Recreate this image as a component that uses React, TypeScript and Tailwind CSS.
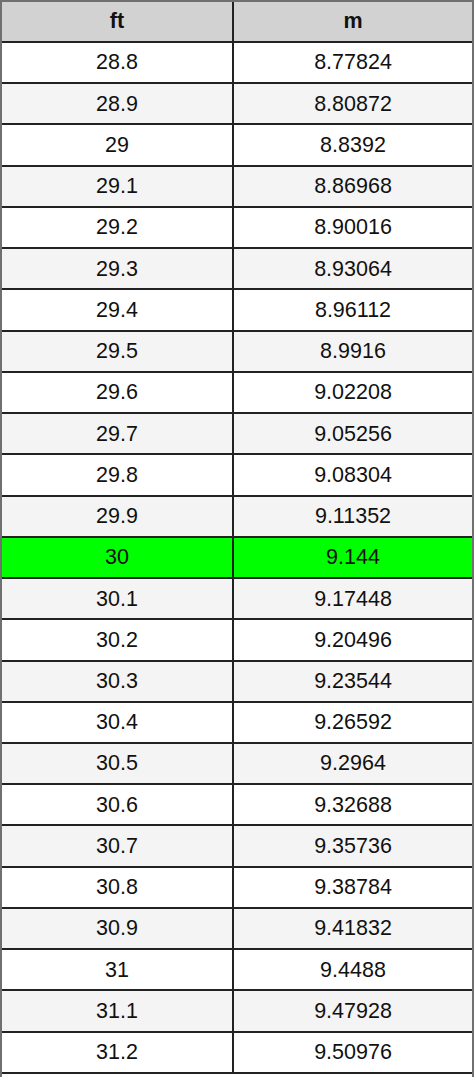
import React from "react"

const rows: [string, string][] = [
  ["28.8", "8.77824"],
  ["28.9", "8.80872"],
  ["29", "8.8392"],
  ["29.1", "8.86968"],
  ["29.2", "8.90016"],
  ["29.3", "8.93064"],
  ["29.4", "8.96112"],
  ["29.5", "8.9916"],
  ["29.6", "9.02208"],
  ["29.7", "9.05256"],
  ["29.8", "9.08304"],
  ["29.9", "9.11352"],
  ["30", "9.144"],
  ["30.1", "9.17448"],
  ["30.2", "9.20496"],
  ["30.3", "9.23544"],
  ["30.4", "9.26592"],
  ["30.5", "9.2964"],
  ["30.6", "9.32688"],
  ["30.7", "9.35736"],
  ["30.8", "9.38784"],
  ["30.9", "9.41832"],
  ["31", "9.4488"],
  ["31.1", "9.47928"],
  ["31.2", "9.50976"]
]

export default function App() {
  return (
    <div className="w-[474px] h-[1077px] bg-white font-['Liberation_Sans',Arial,sans-serif] text-[21.5px] text-[#111]">
      <div className="border-x-2 border-t-2 border-[#707070]">
        {/* Header */}
        <div className="flex h-[41px] bg-[#d2d2d2] border-b-2 border-[#222] font-bold">
          <div className="w-[232px] flex items-center justify-center border-r-2 border-[#222]">ft</div>
          <div className="flex-1 flex items-center justify-center">m</div>
        </div>

        {rows.map(([ft, m], i) => {
          const hl = ft === "30"
          const bg = hl ? "bg-[#00ff00]" : i % 2 === 0 ? "bg-white" : "bg-[#f4f4f4]"
          return (
            <div key={ft} className={`flex h-[41.24px] border-b-2 border-[#222] ${bg}`}>
              <div className="w-[232px] flex items-center justify-center border-r-2 border-[#222]">{ft}</div>
              <div className="flex-1 flex items-center justify-center">{m}</div>
            </div>
          )
        })}
      </div>
      <div className="h-[5px] border-x-2 border-[#707070]" />
    </div>
  )
}
